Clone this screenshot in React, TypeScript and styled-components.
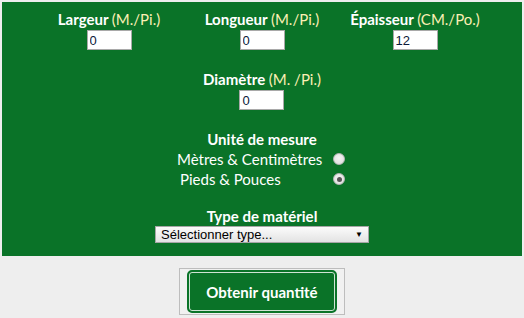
import React from "react";
import styled, { createGlobalStyle } from "styled-components";

const GlobalStyle = createGlobalStyle`
  html, body {
    margin: 0;
    padding: 0;
    background: #eeeeee;
  }
  body {
    font-family: "Lato", "Open Sans", sans-serif;
  }
`;

const Page = styled.div`
  width: 524px;
  height: 318px;
  padding: 2px;
  box-sizing: border-box;
  display: flex;
  flex-direction: column;
  align-items: stretch;
`;

const Panel = styled.div`
  background: #0a7328;
  height: 254px;
  display: flex;
  flex-direction: column;
  align-items: center;
  padding-top: 8px;
  box-sizing: border-box;
  color: #ffffff;
`;

const DimRow = styled.div`
  display: grid;
  grid-template-columns: repeat(3, 153px);
`;

const Field = styled.div`
  display: flex;
  flex-direction: column;
  align-items: center;
  gap: 1px;
`;

const Label = styled.div`
  font-size: 15px;
  line-height: 19px;
  font-weight: 700;
  white-space: nowrap;
`;

const Unit = styled.span`
  font-weight: 400;
  color: #fcefb4;
`;

const NumberInput = styled.input`
  width: 45px;
  height: 20px;
  box-sizing: border-box;
  border: 1px solid #a9a9a9;
  padding: 1px 2px;
  font-family: "Liberation Sans", Arial, sans-serif;
  font-size: 13px;
  color: #0b1a3a;
  background: #fff;
  outline: none;
`;

const CenterBlock = styled.div<{ $top: number }>`
  margin-top: ${(p) => p.$top}px;
  display: flex;
  flex-direction: column;
  align-items: center;
`;

const Heading = styled.div`
  font-size: 15px;
  line-height: 19px;
  font-weight: 700;
`;

const Options = styled.div`
  display: grid;
  grid-template-columns: 156px 12px;
  align-items: center;
  margin-right: 2px;
`;

const OptionLabel = styled.label<{ $indent?: number }>`
  font-size: 15px;
  line-height: 20px;
  padding-left: ${(p) => p.$indent ?? 0}px;
  white-space: nowrap;
`;

const Radio = styled.input`
  appearance: none;
  width: 12px;
  height: 12px;
  margin: 0;
  border-radius: 50%;
  border: 1px solid #b8b8b8;
  background: radial-gradient(circle at 50% 40%, #f4f4f4 0%, #dcdcdc 100%);
  box-sizing: border-box;
  position: relative;

  &:checked::after {
    content: "";
    position: absolute;
    left: 2.5px;
    top: 2.5px;
    width: 5px;
    height: 5px;
    border-radius: 50%;
    background: #555;
  }
`;

const Select = styled.div`
  width: 214px;
  height: 17px;
  box-sizing: border-box;
  border: 1px solid #a6a6a6;
  background: linear-gradient(#fbfbfb, #e3e3e3);
  color: #000;
  font-family: "Liberation Sans", Arial, sans-serif;
  font-size: 13px;
  line-height: 15px;
  padding: 0 5px;
  display: flex;
  justify-content: space-between;
  align-items: center;
`;

const Arrow = styled.span`
  font-size: 8px;
`;

const Footer = styled.div`
  display: flex;
  justify-content: center;
  padding-top: 12px;
`;

const ButtonFrame = styled.div`
  width: 166px;
  height: 47px;
  box-sizing: border-box;
  border: 1px solid #bdbdbd;
  background: #f1f1f1;
  display: flex;
  align-items: center;
  justify-content: center;
`;

const SubmitButton = styled.button`
  width: 150px;
  height: 43px;
  box-sizing: border-box;
  background: #0a7328;
  border: 2px solid #0a7328;
  border-radius: 5px;
  box-shadow: inset 0 0 0 1px #cfe3d4;
  color: #ffffff;
  font-family: "Lato", "Open Sans", sans-serif;
  font-weight: 700;
  font-size: 15px;
  cursor: pointer;
`;

export default function App() {
  return (
    <>
      <GlobalStyle />
      <Page>
        <Panel>
          <DimRow>
            <Field>
              <Label>
                Largeur <Unit>(M./Pi.)</Unit>
              </Label>
              <NumberInput defaultValue="0" />
            </Field>
            <Field>
              <Label>
                Longueur <Unit>(M./Pi.)</Unit>
              </Label>
              <NumberInput defaultValue="0" />
            </Field>
            <Field>
              <Label>
                Épaisseur <Unit>(CM./Po.)</Unit>
              </Label>
              <NumberInput defaultValue="12" />
            </Field>
          </DimRow>
          <CenterBlock $top={20}>
            <Field>
              <Label>
                Diamètre <Unit>(M. /Pi.)</Unit>
              </Label>
              <NumberInput defaultValue="0" />
            </Field>
          </CenterBlock>
          <CenterBlock $top={20}>
            <Heading>Unité de mesure</Heading>
            <Options>
              <OptionLabel>Mètres &amp; Centimètres</OptionLabel>
              <Radio type="radio" name="unit" />
              <OptionLabel $indent={3}>Pieds &amp; Pouces</OptionLabel>
              <Radio type="radio" name="unit" defaultChecked />
            </Options>
          </CenterBlock>
          <CenterBlock $top={18}>
            <Heading>Type de matériel</Heading>
            <Select>
              <span>Sélectionner type...</span>
              <Arrow>▼</Arrow>
            </Select>
          </CenterBlock>
        </Panel>
        <Footer>
          <ButtonFrame>
            <SubmitButton>Obtenir quantité</SubmitButton>
          </ButtonFrame>
        </Footer>
      </Page>
    </>
  );
}
